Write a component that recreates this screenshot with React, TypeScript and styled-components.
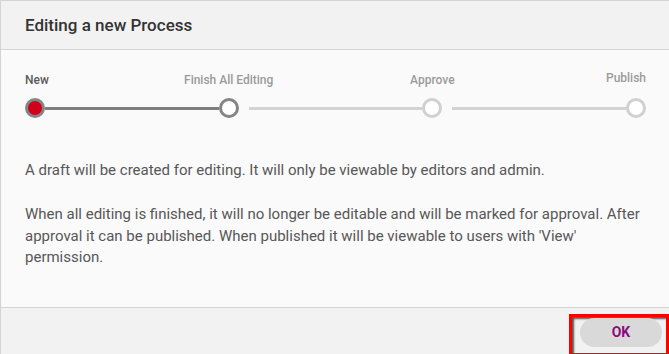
import React from "react";
import styled, { createGlobalStyle } from "styled-components";

const Global = createGlobalStyle`
  *, *::before, *::after { box-sizing: border-box; }
  html, body { margin: 0; padding: 0; background: #ffffff; overflow: hidden; }
  body { font-family: Roboto, "Liberation Sans", Arial, sans-serif; }
`;

const Dialog = styled.div`
  width: 669px;
  height: 354px;
  border-top: 1px solid #d4d4d4;
  border-left: 1px solid #d4d4d4;
  background: #fafafa;
  display: flex;
  flex-direction: column;
  overflow: hidden;
`;

const Header = styled.div`
  height: 49px;
  flex: none;
  display: flex;
  align-items: center;
  padding-left: 24px;
  background: #f2f2f2;
  border-bottom: 1px solid #d4d4d4;
`;

const Title = styled.h2`
  margin: 0;
  font-size: 17px;
  font-weight: 500;
  color: #333333;
  line-height: 20px;
`;

const Body = styled.div`
  padding: 21px 23px 38px 24px;
  background: #fafafa;
  border-bottom: 1px solid #d4d4d4;
`;

const Stepper = styled.div`
  display: flex;
  align-items: flex-end;
`;

const Step = styled.div<{ $align: "start" | "center" | "end" }>`
  width: 20px;
  flex: none;
  display: flex;
  flex-direction: column;
  align-items: ${(p) =>
    p.$align === "start" ? "flex-start" : p.$align === "end" ? "flex-end" : "center"};
`;

const StepLabel = styled.div<{ $current: boolean; $lift?: number }>`
  font-size: 12px;
  font-weight: 500;
  line-height: 14px;
  white-space: nowrap;
  color: ${(p) => (p.$current ? "#5a5a5a" : "#9a9a9a")};
  margin-bottom: ${(p) => 11 + (p.$lift ?? 0)}px;
`;

const Dot = styled.div<{ $state: "active" | "done" | "todo" }>`
  width: 20px;
  height: 20px;
  border-radius: 50%;
  border: 3px solid ${(p) => (p.$state === "todo" ? "#d0d0d0" : "#858585")};
  background: ${(p) => (p.$state === "active" ? "#d0021b" : "#ffffff")};
`;

const Connector = styled.div<{ $done: boolean; $gap: boolean }>`
  flex: 1;
  height: 3px;
  margin-bottom: 8.5px;
  margin-left: ${(p) => (p.$gap ? "10px" : "0")};
  background: ${(p) => (p.$done ? "#7f7f7f" : "#d3d3d3")};
`;

const Text = styled.p<{ $first?: boolean }>`
  margin: ${(p) => (p.$first ? "42px 0 22.5px" : "0")};
  font-size: 15px;
  line-height: 21.5px;
  color: #575757;
`;

const Footer = styled.div`
  flex: 1;
  background: #f2f2f2;
  display: flex;
  justify-content: flex-end;
  align-items: flex-start;
  padding-top: 6px;
`;

const FocusFrame = styled.div`
  border: 3px solid #ff0000;
  box-shadow: inset 2px 2px 2px rgba(0, 0, 0, 0.65);
  padding: 1px 4px 6px 8px;
`;

const OkButton = styled.button`
  width: 82px;
  height: 29px;
  border: none;
  border-radius: 15px;
  background: #d9d9d9;
  color: #8b0a7f;
  font-family: Roboto, "Liberation Sans", Arial, sans-serif;
  font-size: 14px;
  font-weight: 700;
  padding: 0;
  cursor: pointer;
`;

type StepDef = {
  label: string;
  state: "active" | "done" | "todo";
  align: "start" | "center" | "end";
  lift?: number;
};

const steps: StepDef[] = [
  { label: "New", state: "active", align: "start" },
  { label: "Finish All Editing", state: "done", align: "center" },
  { label: "Approve", state: "todo", align: "center" },
  { label: "Publish", state: "todo", align: "end", lift: 2 },
];

export default function App() {
  return (
    <>
      <Global />
      <Dialog>
        <Header>
          <Title>Editing a new Process</Title>
        </Header>
        <Body>
          <Stepper>
            {steps.map((s, i) => (
              <React.Fragment key={s.label}>
                {i > 0 && <Connector $done={i === 1} $gap={i > 1} />}
                <Step $align={s.align}>
                  <StepLabel $current={i === 0} $lift={s.lift}>
                    {s.label}
                  </StepLabel>
                  <Dot $state={s.state} />
                </Step>
              </React.Fragment>
            ))}
          </Stepper>
          <Text $first>
            A draft will be created for editing. It will only be viewable by editors and admin.
          </Text>
          <Text>
            When all editing is finished, it will no longer be editable and will be marked for
            approval. After approval it can be published. When published it will be viewable to
            users with 'View' permission.
          </Text>
        </Body>
        <Footer>
          <FocusFrame>
            <OkButton>OK</OkButton>
          </FocusFrame>
        </Footer>
      </Dialog>
    </>
  );
}
